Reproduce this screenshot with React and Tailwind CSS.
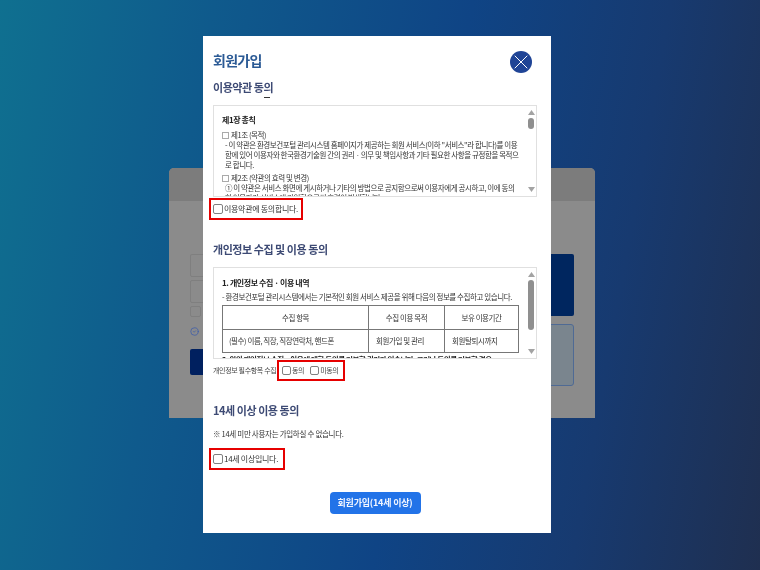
import React from 'react';
import { X, CircleCheck } from 'lucide-react';

const krFont = "font-['Noto_Sans_CJK_KR','Noto_Sans',sans-serif]";

function Scrollbar({ thumbTop, thumbHeight }) {
  return (
    <div className="relative w-[13px] shrink-0">
      <svg className="absolute left-[4.5px] top-[4px]" width="7" height="5" viewBox="0 0 7 5">
        <path d="M3.5 0 L7 5 H0 Z" fill="#a3a3a3" />
      </svg>
      <div
        className="absolute left-[5px] w-[6px] rounded-full bg-[#8f8f8f]"
        style={{ top: thumbTop, height: thumbHeight }}
      />
      <svg className="absolute left-[4.5px] bottom-[4px]" width="7" height="5" viewBox="0 0 7 5">
        <path d="M3.5 5 L7 0 H0 Z" fill="#a3a3a3" />
      </svg>
    </div>
  );
}

function Check({ small }) {
  return (
    <span
      className={`block shrink-0 rounded-[2px] border border-[#808080] bg-white ${small ? 'h-[9px] w-[9px]' : 'h-[10px] w-[10px]'}`}
    />
  );
}

function Square() {
  return <span className="mr-[2px] inline-block h-[7px] w-[7px] border border-[#aaa] align-[-1px]" />;
}

function ScrollBox({ className, thumbTop, thumbHeight, children }) {
  return (
    <div className={`flex h-[92px] w-[324px] overflow-hidden border border-[#e0e0e0] ${className}`}>
      <div className="min-w-0 flex-1 overflow-hidden pl-[8px] blur-[0.3px]">{children}</div>
      <Scrollbar thumbTop={thumbTop} thumbHeight={thumbHeight} />
    </div>
  );
}

function SectionTitle({ className, children }) {
  return <h3 className={`text-[11px] font-bold leading-[16px] tracking-[-0.45px] text-[#3d4a74] blur-[0.3px] ${className}`}>{children}</h3>;
}

export default function App() {
  return (
    <div className={`relative h-[570px] w-[760px] overflow-hidden bg-[linear-gradient(100deg,#0f7090_0%,#0f5a8c_25%,#0f4485_55%,#173a70_78%,#1f2f50_100%)] ${krFont}`}>
      {/* Page behind the dialog */}
      <div className="pl-[169px] pt-[168px]">
        <div className="h-[250px] w-[426px] overflow-hidden rounded-t-[5px] bg-[#8b8b8b]">
          <div className="h-[33px] bg-[#7c7c7c]" />
          <div className="flex justify-between pl-[21px] pr-[21px] pt-[53px]">
            <div className="w-[200px]">
              <div className="h-[23px] rounded-[2px] border border-[#7f7f7f]" />
              <div className="mt-[3px] h-[23px] rounded-[2px] border border-[#7f7f7f]" />
              <div className="mt-[3px] h-[11px] w-[11px] rounded-[2px] border border-[#7f7f7f]" />
              <CircleCheck className="mt-[10px] h-[9px] w-[9px] text-[#3c5cab]" strokeWidth={2} />
              <div className="mt-[13px] h-[26px] rounded-[2px] bg-[#00205f]" />
            </div>
            <div className="w-[120px]">
              <div className="h-[62px] rounded-[2px] bg-[#00265f]" />
              <div className="mt-[8px] h-[62px] rounded-[3px] border border-[#4f6a94] bg-[#7a858e]" />
            </div>
          </div>
        </div>
      </div>

      {/* Dialog */}
      <div className="absolute left-[203px] top-[36px] h-[497px] w-[348px] bg-white pl-[10px]">
        <div className="flex items-start justify-between pr-[19px] pt-[15px]">
          <h2 className="text-[14px] font-bold leading-[18px] tracking-[-0.7px] text-[#2b5a95] blur-[0.3px]">회원가입</h2>
          <button className="flex h-[22px] w-[22px] items-center justify-center rounded-full bg-[#1f4496]">
            <X className="h-[24px] w-[24px] shrink-0 text-white" strokeWidth={1} />
          </button>
        </div>

        <SectionTitle className="mt-[6px]">이용약관 동의</SectionTitle>
        <div className="ml-[51px] mt-[2px] h-px w-[6px] bg-[#333]" />

        <ScrollBox className="mt-[7px]" thumbTop={12} thumbHeight={11}>
          <div className="whitespace-nowrap pt-[9px] text-[7.5px] leading-[10px] tracking-[-0.42px] text-[#333]">
            <p className="mb-[5px] text-[8px] font-bold text-[#222]">제1장 총칙</p>
            <p><Square />제1조 (목적)</p>
            <p className="pl-[3px]">- 이 약관은 환경보건포털 관리시스템 홈페이지가 제공하는 회원 서비스(이하 "서비스"라 합니다)를 이용</p>
            <p className="pl-[3px]">함에 있어 이용자와 한국환경기술원 간의 권리 · 의무 및 책임사항과 기타 필요한 사항을 규정함을 목적으</p>
            <p className="pl-[3px]">로 합니다.</p>
            <p className="mt-[3px]"><Square />제2조 (약관의 효력 및 변경)</p>
            <p className="pl-[3px]">① 이 약관은 서비스 화면에 게시하거나 기타의 방법으로 공지함으로써 이용자에게 공시하고, 이에 동의</p>
            <p className="pl-[3px]">한 이용자가 서비스에 가입함으로써 효력이 발생합니다.</p>
          </div>
        </ScrollBox>

        <div className="ml-[-4px] mt-px flex h-[22px] w-[94px] items-center gap-[1px] border-2 border-[#e60000] pl-[2px] text-[8px] tracking-[-0.3px] text-[#333]">
          <Check />
          <span className="blur-[0.3px]">이용약관에 동의합니다.</span>
        </div>

        <SectionTitle className="mt-[21px]">개인정보 수집 및 이용 동의</SectionTitle>

        <ScrollBox className="mt-[10px]" thumbTop={12} thumbHeight={50}>
          <div className="whitespace-nowrap pt-[10px] text-[7.5px] leading-[10px] tracking-[-0.42px] text-[#333]">
            <p className="mb-[4px] text-[8px] font-bold text-[#222]">1. 개인정보 수집 · 이용 내역</p>
            <p className="mb-[3px]">- 환경보건포털 관리시스템에서는 기본적인 회원 서비스 제공을 위해 다음의 정보를 수집하고 있습니다.</p>
            <table className="w-[297px] table-fixed border-collapse text-center">
              <tbody>
                <tr className="h-[24px]">
                  <td className="w-[146px] border border-[#777]">수집 항목</td>
                  <td className="w-[76px] border border-[#777]">수집 이용 목적</td>
                  <td className="border border-[#777]">보유 이용기간</td>
                </tr>
                <tr className="h-[23px]">
                  <td className="border border-[#777] pl-[6px] text-left">(필수) 이름, 직장, 직장연락처, 핸드폰</td>
                  <td className="border border-[#777] pl-[7px] text-left">회원가입 및 관리</td>
                  <td className="border border-[#777] pl-[7px] text-left">회원탈퇴시까지</td>
                </tr>
              </tbody>
            </table>
            <p className="mt-[2px] font-bold text-[#222]">2. 위의 개인정보 수집 · 이용에 대한 동의를 거부할 권리가 있습니다. 그러나 동의를 거부할 경우</p>
          </div>
        </ScrollBox>

        <div className="relative flex h-[21px] items-center pt-[2px] text-[7px] tracking-[-0.35px] text-[#444]">
          <span className="blur-[0.3px]">개인정보 필수항목 수집</span>
          <div className="absolute left-[64px] top-px flex h-[21px] w-[68px] items-center border-2 border-[#e60000] pl-[3px] text-[7px]">
            <Check small />
            <span className="ml-[1px] blur-[0.3px]">동의</span>
            <span className="ml-[6px]"><Check small /></span>
            <span className="ml-[1px] blur-[0.3px]">미동의</span>
          </div>
        </div>

        <SectionTitle className="mt-[22px]">14세 이상 이용 동의</SectionTitle>

        <p className="mt-[11px] text-[7.5px] leading-[10px] tracking-[-0.3px] text-[#333] blur-[0.3px]">※ 14세 미만 사용자는 가입하실 수 없습니다.</p>

        <div className="ml-[-4px] mt-[9px] flex h-[22px] w-[76px] items-center gap-[1px] border-2 border-[#e60000] pl-[2px] text-[8px] tracking-[-0.3px] text-[#333]">
          <Check />
          <span className="blur-[0.3px]">14세 이상입니다.</span>
        </div>

        <div className="mt-[22px] flex justify-center pr-[14px]">
          <button className="h-[22px] w-[91px] rounded-[4px] bg-[#2273e8] text-[9px] font-bold tracking-[-0.2px] text-[#f2f6ff]">
            <span className="block blur-[0.3px]">회원가입(14세 이상)</span>
          </button>
        </div>
      </div>
    </div>
  );
}
